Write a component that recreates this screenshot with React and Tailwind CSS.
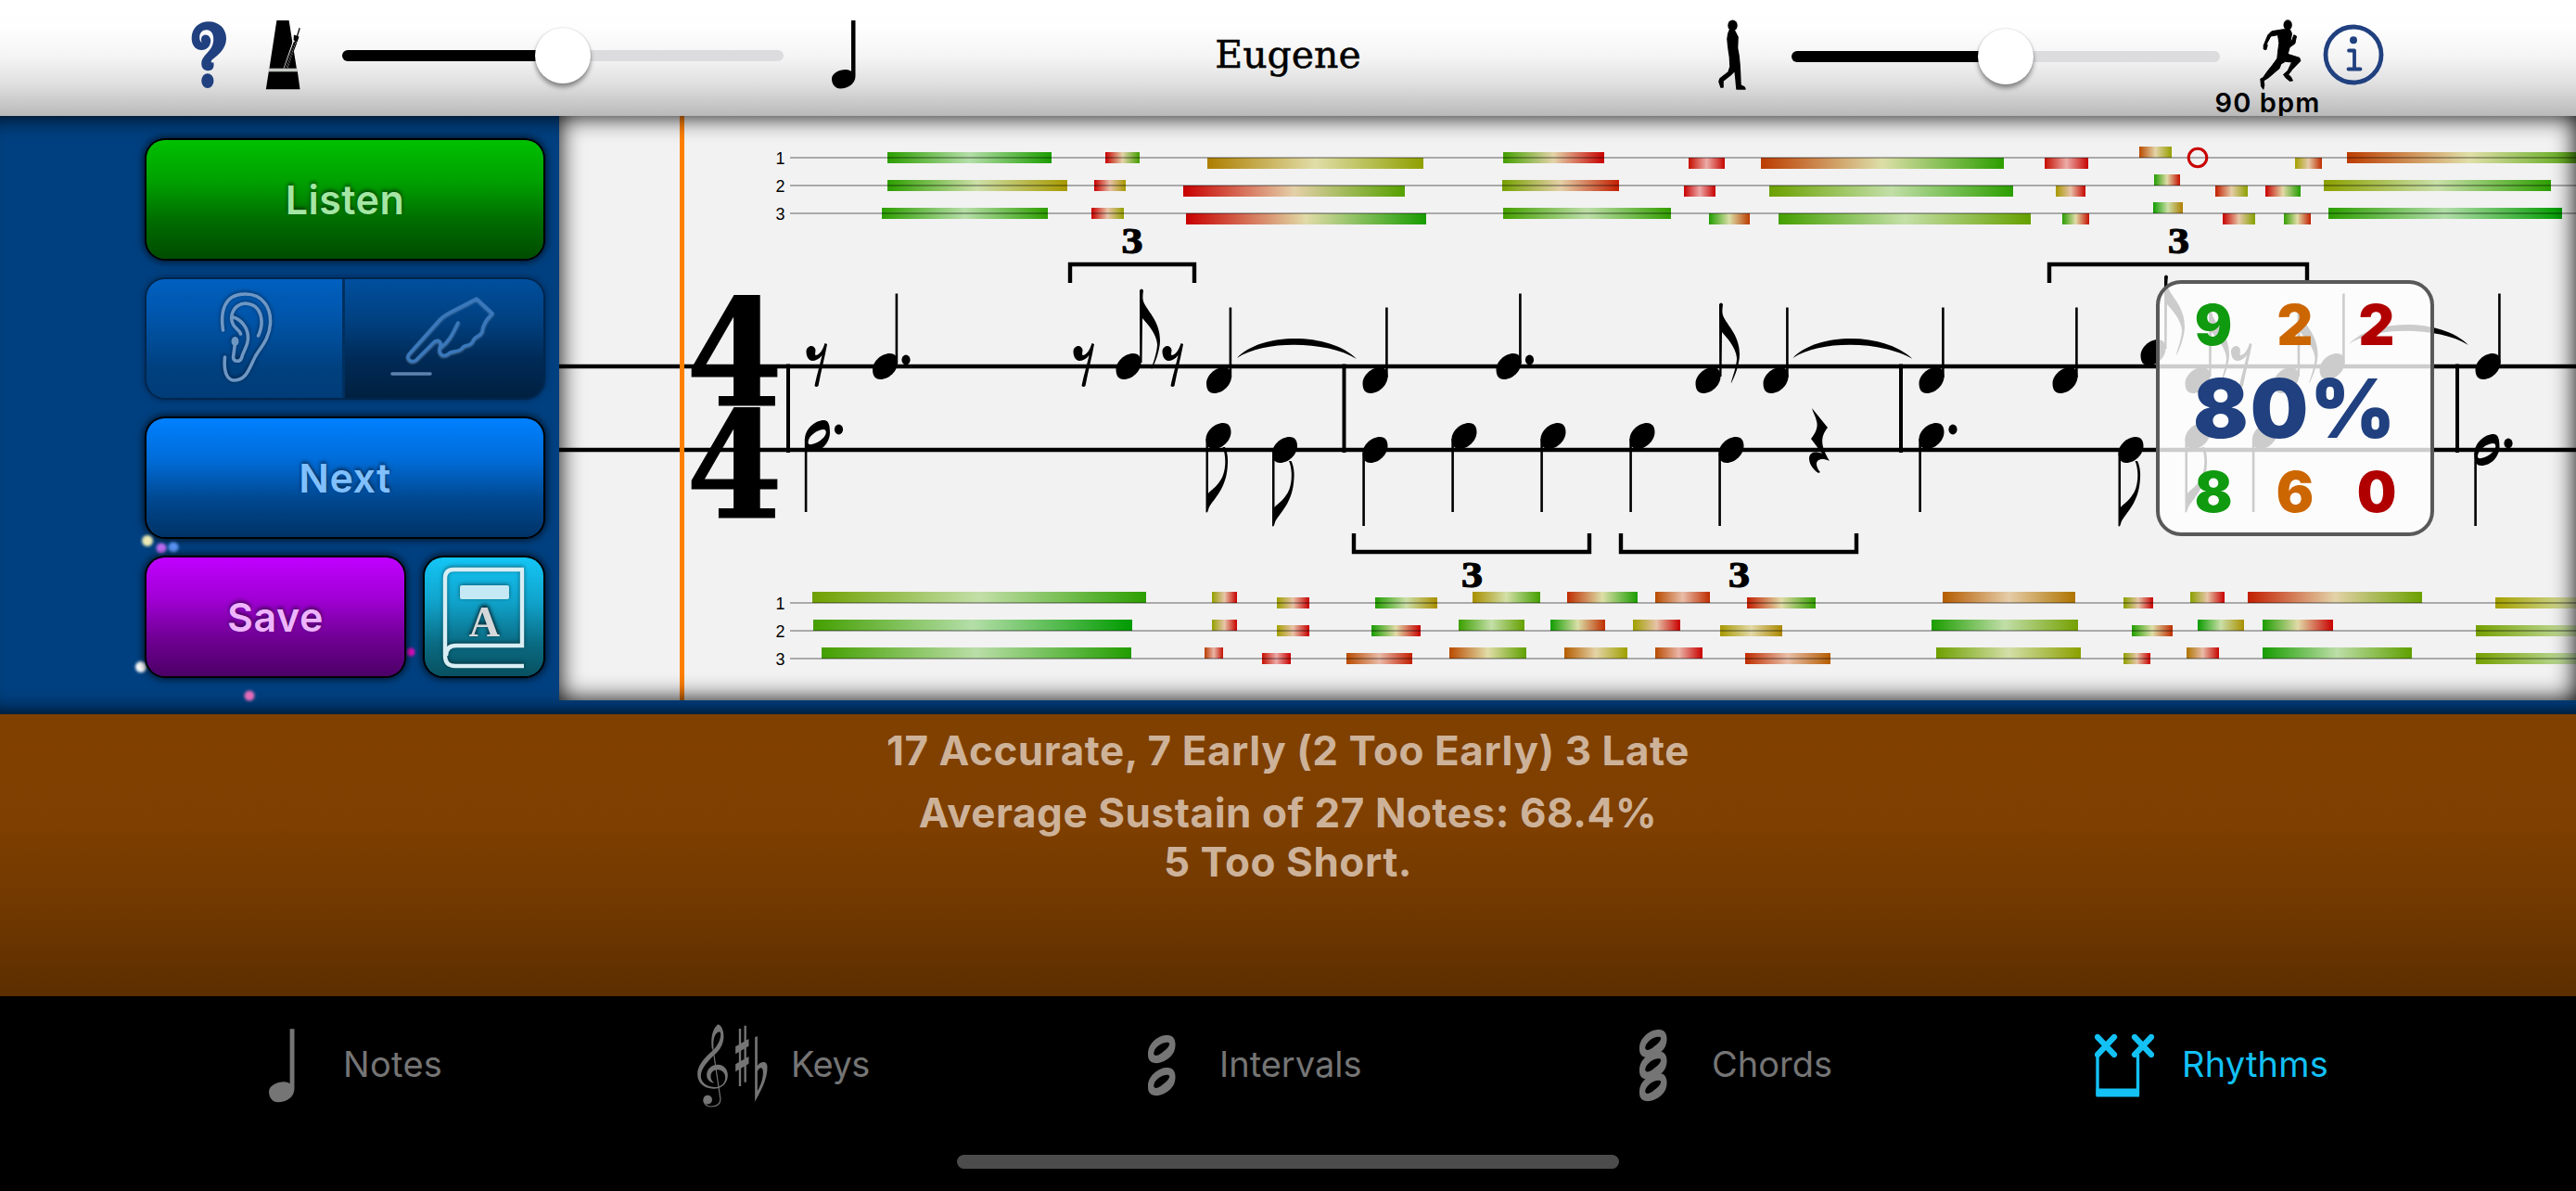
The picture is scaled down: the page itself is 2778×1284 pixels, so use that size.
import clsx from "clsx";

/* ---------- timing bars ---------- */

// 0 = far off the beat (red), 1 = spot on (green)
const STOPS = [
  [200, 0, 0],
  [185, 75, 0],
  [165, 160, 0],
  [85, 160, 0],
  [0, 155, 0],
];

function accuracyColor(t, fade = 0) {
  const pos = Math.min(Math.max(t, 0), 1) * (STOPS.length - 1);
  const i = Math.min(Math.floor(pos), STOPS.length - 2);
  const rgb = STOPS[i].map((c, k) => {
    const v = c + (STOPS[i + 1][k] - c) * (pos - i);
    return Math.round(v + (255 - v) * fade);
  });
  return `rgb(${rgb.join(",")})`;
}

// [offset, x1, x2, start accuracy, end accuracy]
const TRACKS = [
  {
    label: "1",
    y: 170,
    bars: [
      [0, 957, 1134, 0.87, 0.92],
      [0, 1192, 1229, 0, 0.8],
      [1, 1302, 1535, 0.4, 0.57],
      [0, 1621, 1730, 0.8, 0],
      [1, 1821, 1860, 0.05, 0.02],
      [1, 1899, 2161, 0.2, 0.87],
      [1, 2205, 2252, 0.05, 0.02],
      [-1, 2307, 2342, 0.25, 0.55],
      [1, 2475, 2504, 0.5, 0.15],
      [0, 2531, 2795, 0.2, 0.8],
    ],
  },
  {
    label: "2",
    y: 200,
    bars: [
      [0, 957, 1151, 0.87, 0.48],
      [0, 1180, 1214, 0, 0.48],
      [1, 1276, 1515, 0, 0.75],
      [0, 1620, 1746, 0.65, 0.1],
      [1, 1816, 1850, 0, 0],
      [1, 1908, 2171, 0.68, 0.87],
      [1, 2217, 2249, 0.48, 0.02],
      [-1, 2323, 2351, 0.9, 0.05],
      [1, 2389, 2424, 0.1, 0.57],
      [1, 2443, 2481, 0, 0.9],
      [0, 2506, 2751, 0.58, 0.87],
    ],
  },
  {
    label: "3",
    y: 230,
    bars: [
      [0, 951, 1130, 0.87, 0.87],
      [0, 1177, 1212, 0, 0.55],
      [1, 1279, 1538, 0, 0.93],
      [0, 1621, 1802, 0.8, 0.85],
      [1, 1843, 1887, 0.9, 0.2],
      [1, 1918, 2190, 0.8, 0.7],
      [1, 2224, 2253, 0.88, 0.05],
      [-1, 2322, 2354, 0.95, 0.4],
      [1, 2397, 2432, 0, 0.6],
      [1, 2463, 2492, 0.85, 0.1],
      [0, 2511, 2763, 0.87, 1],
    ],
  },
  {
    label: "1",
    y: 650,
    bars: [
      [-1, 876, 1236, 0.67, 0.87],
      [-1, 1307, 1334, 0.55, 0],
      [0, 1377, 1412, 0.52, 0],
      [0, 1483, 1550, 0.9, 0.45],
      [-1, 1588, 1661, 0.45, 0.8],
      [-1, 1690, 1766, 0.15, 0.92],
      [-1, 1785, 1844, 0.25, 0.15],
      [0, 1884, 1958, 0.1, 0.85],
      [-1, 2095, 2238, 0.3, 0.37],
      [0, 2290, 2322, 0.58, 0],
      [-1, 2362, 2399, 0.58, 0],
      [-1, 2424, 2612, 0.1, 0.68],
      [0, 2691, 2860, 0.5, 0.7],
    ],
  },
  {
    label: "2",
    y: 680,
    bars: [
      [-1, 877, 1221, 0.8, 1],
      [-1, 1307, 1334, 0.55, 0],
      [0, 1377, 1412, 0.5, 0],
      [0, 1479, 1532, 0.93, 0],
      [-1, 1573, 1644, 0.82, 0.7],
      [-1, 1672, 1731, 0.95, 0.15],
      [-1, 1761, 1812, 0.52, 0],
      [0, 1855, 1922, 0.48, 0.43],
      [-1, 2083, 2241, 0.92, 0.65],
      [0, 2299, 2343, 0.9, 0.15],
      [-1, 2370, 2420, 0.97, 0.45],
      [-1, 2440, 2516, 0.92, 0],
      [0, 2670, 2880, 0.65, 0.8],
    ],
  },
  {
    label: "3",
    y: 710,
    bars: [
      [-1, 886, 1220, 0.8, 0.9],
      [-1, 1299, 1319, 0.2, 0.05],
      [0, 1361, 1392, 0.05, 0],
      [0, 1452, 1523, 0.25, 0.1],
      [-1, 1563, 1646, 0.25, 0.72],
      [-1, 1687, 1755, 0.3, 0.52],
      [-1, 1785, 1836, 0.25, 0],
      [0, 1882, 1974, 0.15, 0.3],
      [-1, 2088, 2244, 0.67, 0.58],
      [0, 2290, 2319, 0.57, 0],
      [-1, 2358, 2393, 0.37, 0.02],
      [-1, 2440, 2601, 0.93, 0.72],
      [0, 2670, 2880, 0.65, 0.9],
    ],
  },
];

function Track({ id, track }) {
  return (
    <g>
      {track.bars.map(([offset, x1, x2, a, b], i) => (
        <g key={i}>
          <linearGradient id={`bar-${id}-${i}`}>
            <stop offset="0" stopColor={accuracyColor(a)} />
            <stop offset="0.5" stopColor={accuracyColor((a + b) / 2, 0.66)} />
            <stop offset="1" stopColor={accuracyColor(b)} />
          </linearGradient>
          <rect
            x={x1}
            y={track.y - 6 + offset * 6}
            width={x2 - x1}
            height={12}
            fill={`url(#bar-${id}-${i})`}
          />
        </g>
      ))}
      <path d={`M852 ${track.y}H2778`} stroke="#000" strokeOpacity="0.4" strokeWidth="1.6" />
      <text x="841.5" y={track.y + 6.5} textAnchor="middle" className="font-['Liberation_Sans',sans-serif] text-[18px]">
        {track.label}
      </text>
    </g>
  );
}

/* ---------- notation ---------- */

const HEAD =
  "M-13.5 3C-13.5-5-4-14 5-14C11-14 13.5-10 13.5-4C13.5 5 4 14-5 14C-11 14-13.5 10-13.5 3Z";
const HALF_HEAD =
  "M-13.5 4C-13.5-8-2-17 7-17C12-17 13.5-12 13.5-3C13 8 4 17-6 17C-11 17-13.5 14-13.5 4ZM-10 7C-10 11-3 9 3 5C10 0 11-6 7-7C0-7-10 0-10 7Z";
const FLAG_UP =
  "M12-82Q14-85 16-82C15-74 15-71 18-66C24-56 34-46 34-28C34-18 29-4 25 3C24 3 31-14 31-24C30-36 20-46 15-52L14.5-4H12.2Z";
const FLAG_DOWN =
  "M-13.5 3V82Q-12 84-10.5 78C-6 68 9 58 10 30C10.5 22 9 16 7 12H4.5C9 22 8 40 2 48C-3 56-8 58-11 62V3Z";
const EIGHTH_REST =
  "M0 9C0 3 8 0 10 7C10 10 9 12 10 13C14 13 18 7 20 0L22.5 1C20 15 16 30 13 46Q11 48 9 46C11 36 14 26 17 13C14 17 10 19 6 19C2 18 0 14 0 9Z";
const QUARTER_REST =
  "M3 0L20 21C12 31 12 40 22 57C13 53 8 56 8 60C8 64 11 68 12 69L10 70C4 66 0 60 0 54C1 46 8 47 14 49L2 33C7 27 10 20 8 14C7 9 4 4 3 0Z";

const NOTES = [
  { x: 954.5, y: 395, dot: true },
  { x: 1217, y: 395, flag: true },
  { x: 1314.5, y: 410 },
  { x: 1483, y: 410 },
  { x: 1627, y: 395, dot: true },
  { x: 1842, y: 410, flag: true },
  { x: 1915, y: 410 },
  { x: 2083, y: 410 },
  { x: 2227, y: 410 },
  { x: 2322, y: 380, flag: true },
  { x: 2370, y: 410, flag: true },
  { x: 2465.5, y: 410, flag: true },
  { x: 2515, y: 395 },
  { x: 2683, y: 395 },
  { x: 881.5, y: 470, down: true, half: true, dot: true },
  { x: 1314, y: 470, down: true, flag: true },
  { x: 1385.5, y: 485, down: true, flag: true },
  { x: 1483, y: 485, down: true },
  { x: 1579, y: 470, down: true },
  { x: 1675, y: 470, down: true },
  { x: 1771, y: 470, down: true },
  { x: 1867, y: 485, down: true },
  { x: 2083, y: 470, down: true, dot: true },
  { x: 2298, y: 485, down: true, flag: true },
  { x: 2370, y: 470, down: true, flag: true },
  { x: 2442.5, y: 470, down: true },
  { x: 2682, y: 485, down: true, half: true, dot: true },
];

const TRIPLETS = [
  { x1: 1154, x2: 1288, textX: 1221, textY: 273, y: 285, tip: 305 },
  { x1: 2210, x2: 2488, textX: 2349.5, textY: 273, y: 285, tip: 305 },
  { x1: 1460, x2: 1714, textX: 1587.5, textY: 633, y: 595, tip: 575 },
  { x1: 1748, x2: 2002, textX: 1875.5, textY: 633, y: 595, tip: 575 },
];

const TIES = [
  [1334, 386],
  [1933.5, 386],
  [2533, 371],
];

function Note({ x, y, down, half, flag, dot }) {
  return (
    <g transform={`translate(${x} ${y})`}>
      <path d={half ? HALF_HEAD : HEAD} fillRule="evenodd" />
      {flag && <path d={down ? FLAG_DOWN : FLAG_UP} />}
      {!flag && <path d={down ? "M-12.4 3V82" : "M12.4-3V-78.5"} stroke="#000" strokeWidth="2.6" />}
      {dot && <ellipse cx={half || down ? 23 : 22.5} cy="-7" rx="4.6" ry="5.4" />}
    </g>
  );
}

function Score() {
  return (
    <svg viewBox="603 125 2175 630" className="block h-[630px] w-[2175px]">
      {TRACKS.map((track, i) => (
        <Track key={i} id={i} track={track} />
      ))}
      <circle cx="2370" cy="170" r="9.8" fill="none" stroke="#c80000" strokeWidth="3" />

      <path d="M603 395H2778M603 485H2778" stroke="#000" strokeWidth="4.6" />
      <path d="M850 392.5V488M1449.5 392.5V488M2050 392.5V488M2650 392.5V488" stroke="#000" strokeWidth="4" />

      {/* time signature */}
      {[437, 558].map((y) => (
        <text
          key={y}
          transform={`translate(792 ${y}) scale(0.94 1)`}
          textAnchor="middle"
          stroke="#000"
          strokeWidth="1"
          className="font-['DejaVu_Serif',serif] text-[159px] font-bold"
        >
          4
        </text>
      ))}

      {NOTES.map((note, i) => (
        <Note key={i} {...note} />
      ))}
      {[869.5, 1157.5, 1253.5, 2406].map((x) => (
        <path key={x} d={EIGHTH_REST} transform={`translate(${x} 370)`} />
      ))}
      <path d={QUARTER_REST} transform="translate(1951 440)" />
      {TIES.map(([x, y]) => (
        <path
          key={x}
          d="M0 0C26-28 100-28 129 1C98-18 30-20 0 0Z"
          transform={`translate(${x} ${y})`}
        />
      ))}

      {TRIPLETS.map((t) => (
        <g key={t.textX}>
          <path d={`M${t.x1} ${t.tip}V${t.y}H${t.x2}V${t.tip}`} fill="none" stroke="#000" strokeWidth="4.4" />
          <text
            transform={`translate(${t.textX} ${t.textY}) scale(1.18 1)`}
            textAnchor="middle"
            stroke="#000"
            strokeWidth="1.2"
            className="font-['Liberation_Serif',serif] text-[39px] font-bold"
          >
            3
          </text>
        </g>
      ))}

      {/* playhead */}
      <path d="M735.5 125V755" stroke="#ff8000" strokeWidth="5" />
    </svg>
  );
}

function ScoreCard() {
  const top = ["9", "2", "2"];
  const bottom = ["8", "6", "0"];
  const colors = ["text-[#0f9a0f]", "text-[#cc6600]", "text-[#b00000]"];
  const row = (values) => (
    <div className="flex justify-center text-[60px] leading-[60px]">
      {values.map((v, i) => (
        <span key={i} className={clsx("w-[88px] text-center", colors[i])}>
          {v}
        </span>
      ))}
    </div>
  );
  return (
    <div className="absolute top-[177px] left-[1722px] flex h-[276px] w-[300px] flex-col items-stretch rounded-[27px] border-[4.5px] border-[#595959] bg-white/80 pt-[14px] font-['Inter',sans-serif] font-black">
      {row(top)}
      <div className="my-[15px] text-center text-[88px] leading-[90px] tracking-[2px] text-[#20407f]">80%</div>
      {row(bottom)}
    </div>
  );
}

/* ---------- top bar ---------- */

function HelpIcon() {
  return (
    <svg viewBox="46 38 118 222" className="h-[74px] w-[39px]" fill="#20407f">
      <path d="M104 41C139 41 161 66 161 96C161 130 134 150 117 163C108 171 112 178 119 173C123 188 118 201 101 201C88 201 80 192 80 178C80 160 96 148 106 135C116 122 121 108 119 92C117 76 108 68 96 68C82 68 75 78 74 90C73 99 76 107 82 110C76 100 80 84 93 84C104 84 111 94 110 106C108 124 96 133 82 134C62 135 48 118 48 96C48 64 70 41 104 41Z" />
      <ellipse cx="100" cy="234" rx="20" ry="24" />
    </svg>
  );
}

function MetronomeIcon() {
  return (
    <svg viewBox="286 30 114 230" className="h-[76px] w-[38px]">
      <path d="M323 33H363L388 190H299ZM297 200H391L399 258H288Z" />
      <path d="M351 192L383 100" stroke="#fff" strokeWidth="13" />
      <path d="M348 190L381 102M356 190L388 104" stroke="#000" strokeWidth="3.4" />
      <path d="M352 190L385 100L398 58" fill="none" stroke="#000" strokeWidth="4" />
      <path d="M379 80L396 86L390 104L378 97Z" />
      <path d="M296 195H392" stroke="#c4c8c4" strokeWidth="9" />
    </svg>
  );
}

function QuarterNoteIcon({ className }) {
  return (
    <svg viewBox="0 0 26 74" className={className} fill="currentColor">
      <path d="M0 63C0 57 8 53 15 53C18 53 20 54 21 55V0H25.5V60C25.5 68 18 73.5 9 73.5C4 73.5 0 69 0 63Z" />
    </svg>
  );
}

function WalkIcon() {
  return (
    <svg viewBox="0 21 33 77" className="h-[77px] w-[33px]">
      <ellipse cx="17.5" cy="27.5" rx="5.2" ry="6" />
      <path
        d="M15 31L13 36L12 42L13 52L14.5 62L15 72L13 78L4 85L3 88L5 94L7 94L7 87L16 80L20 76L21 85L22 96H31L30 94L26 92L25.5 80L25 70L24 60L22.5 52L23 40L20 34Z"
        stroke="#000"
        strokeWidth="1.6"
        strokeLinejoin="round"
      />
    </svg>
  );
}

function RunIcon() {
  return (
    <svg viewBox="172 34 134 228" className="h-[76px] w-[45px]">
      <ellipse cx="262" cy="52" rx="14" ry="17" />
      <path
        d="M248 66L210 72L198 84L184 118L184 130L192 132L196 118L194 112L207 88L230 84L234 110L230 140L228 160L212 182L196 202L182 222L174 226L176 250L183 260L186 246L184 232L200 222L235 192L240 178L254 170L275 172L262 200L248 212L255 222L268 233L278 232L272 220L264 212L277 195L303 168L300 158L262 146L268 124L285 112L290 88L282 84L277 98L270 108L275 80L270 68Z"
        stroke="#000"
        strokeWidth="3"
        strokeLinejoin="round"
      />
    </svg>
  );
}

function InfoIcon() {
  return (
    <svg viewBox="0 0 66 66" className="h-[66px] w-[66px]" fill="none" stroke="#20407f" strokeLinecap="round">
      <circle cx="33" cy="33" r="30" strokeWidth="4.8" />
      <circle cx="33" cy="17.2" r="4" fill="#20407f" stroke="none" />
      <path d="M28 28.5H34V48.5M27.5 48.5H40.5" strokeWidth="3.8" strokeLinejoin="round" />
    </svg>
  );
}

function Slider({ className, value }) {
  return (
    <div className={clsx("flex h-[60px] items-center", className)}>
      <div className="h-3 rounded-l-full bg-black" style={{ width: `calc(${value}% - 26px)` }} />
      <div className="relative -mx-1 size-[60px] shrink-0 rounded-full bg-white shadow-[0_4px_5px_rgba(0,0,0,0.4),0_0_2px_rgba(0,0,0,0.2)]" />
      <div className="h-3 flex-1 rounded-r-full bg-[#dcdcde]" />
    </div>
  );
}

function TopBar() {
  return (
    <header className="flex h-[125px] items-start bg-[linear-gradient(#fff_0%,#fefefe_24%,#f4f4f4_50%,#e0e0e0_72%,#b9b9b9_100%)] pt-[21px] pl-[206px]">
      <div className="mt-[1px]">
        <HelpIcon />
      </div>
      <div className="ml-[41px]">
        <MetronomeIcon />
      </div>
      <Slider className="mt-[9px] ml-[45px] w-[476px]" value={50} />
      <QuarterNoteIcon className="mt-[1px] ml-[52px] h-[74px] w-[26px]" />
      <h1 className="mt-[11px] ml-[337px] w-[258px] text-center font-['DejaVu_Serif',serif] text-[41px] leading-[54px] font-normal [-webkit-text-stroke:0.5px_#000]">
        Eugene
      </h1>
      <div className="ml-[333px]">
        <WalkIcon />
      </div>
      <Slider className="mt-[10px] ml-[48px] w-[462px]" value={50} />
      <div className="-ml-[6px] flex w-[112px] flex-col items-center">
        <div className="ml-[31px]">
          <RunIcon />
        </div>
        <span className="-mt-[2px] ml-[3px] font-['Inter',sans-serif] text-[29px] leading-8 font-semibold tracking-[1.1px] whitespace-nowrap">
          90 bpm
        </span>
      </div>
      <div className="mt-[5px] ml-[5px]">
        <InfoIcon />
      </div>
    </header>
  );
}

/* ---------- side panel ---------- */

const BUTTON =
  "flex h-32 items-center justify-center rounded-[20px] font-['Inter',sans-serif] text-[43px] font-semibold tracking-[0.5px] shadow-[0_0_0_2px_#000,0_0_8px_3px_rgba(0,0,0,0.75)] [text-shadow:0_-2px_4px_rgba(0,0,0,0.6)]";

function EarIcon() {
  return (
    <svg
      viewBox="227.5 312 70 106"
      className="h-[106px] w-[70px] drop-shadow-[0_-1px_2px_rgba(0,0,0,0.5)]"
      fill="none"
      stroke="#6f97c4"
      strokeWidth="3.6"
      strokeLinecap="round"
    >
      <path d="M239 356C236 336 240 317 263 317C283 317 291 333 290 349C289 365 280 374 274 384C267 397 265 410 250 410C241 408 240 396 241 385" />
      <path d="M277 362C284 347 281 328 263 327C251 328 245 340 250 350C252 354 257 356 258 360" />
      <path d="M250 342C258 344 266 353 266 364C266 373 261 378 259 386C257 391 250 390 250 385L252 370" />
      <ellipse cx="252" cy="368" rx="4" ry="5" fill="#6f97c4" stroke="none" />
    </svg>
  );
}

function TapIcon() {
  return (
    <svg viewBox="417 317 122 96" className="h-[96px] w-[122px]" fill="none" strokeLinecap="round" strokeLinejoin="round">
      <path
        d="M513 322L530 338C524 344 520 349 519 358C516 364 511 361 509 368C505 375 500 370 497 376C491 381 486 377 482 382C475 386 471 380 474 373C475 368 472 366 468 368L448 388C443 392 436 387 440 382L474 344Q478 340 484 337ZM493 348C488 358 484 368 474 375"
        stroke="#3a78bc"
        strokeWidth="3.4"
        className="drop-shadow-[0_1px_1px_rgba(160,185,215,0.5)]"
      />
      <path d="M422 403H463" stroke="#5c82ae" strokeWidth="3.6" />
    </svg>
  );
}

function BookIcon() {
  return (
    <svg viewBox="0 0 128 128" className="size-32 drop-shadow-[0_-1px_2px_rgba(0,0,0,0.5)]" fill="none" stroke="#d8eef4" strokeWidth="4.4">
      <path d="M107 13H31Q22 13 22 23V106Q22 117 33 117H107" />
      <path d="M105 13V95H34Q23 95 23 106" />
      <rect x="38" y="30" width="53" height="15" rx="2" fill="#c4e9f4" stroke="none" />
      <text x="64.5" y="84.5" textAnchor="middle" fill="#d4d8da" stroke="none" className="font-['Liberation_Serif',serif] text-[46px] font-bold">
        A
      </text>
    </svg>
  );
}

const SPARKS = [
  { x: 159, y: 458, r: 6, color: "#ecebb4" },
  { x: 174, y: 466, r: 5.5, color: "#bd6bf0" },
  { x: 187, y: 465, r: 5.5, color: "#5a92f2" },
  { x: 152, y: 594, r: 6, color: "#ffffff" },
  { x: 443, y: 578, r: 4.5, color: "#e60cc4" },
  { x: 269, y: 625, r: 5.5, color: "#e46cb8" },
];

function SidePanel() {
  return (
    <aside className="relative flex w-[603px] shrink-0 flex-col gap-[22px] pt-[26px] pr-[17px] pl-[158px]">
      <button className={clsx(BUTTON, "bg-[linear-gradient(#00c000,#00a000_35%,#006c00_68%,#004c00)] text-[#a4e6a4]")}>
        Listen
      </button>
      <div className="flex h-32 overflow-hidden rounded-[20px] shadow-[0_0_0_2px_#00264d,0_0_7px_2px_rgba(0,20,50,0.6)]">
        <div className="flex w-[214px] items-center justify-center border-r-[3px] border-[#00305f] bg-[linear-gradient(#0060c0,#0054a8_35%,#00407f_75%,#003c78)]">
          <EarIcon />
        </div>
        <div className="flex flex-1 items-center justify-center bg-[linear-gradient(#004f9e,#004080_35%,#002a56_68%,#002040)]">
          <TapIcon />
        </div>
      </div>
      <button className={clsx(BUTTON, "bg-[linear-gradient(#0080ff,#006cd8_35%,#004890_68%,#003366)] text-[#80c0ff]")}>
        Next
      </button>
      <svg viewBox="0 0 603 645" className="absolute inset-0 h-[645px] w-[603px] blur-[1.5px]">
        {SPARKS.map((s) => (
          <circle key={s.x} cx={s.x} cy={s.y} r={s.r} fill={s.color} />
        ))}
      </svg>
      <div className="relative flex justify-between">
        <button className={clsx(BUTTON, "w-[278px] bg-[linear-gradient(#c000ff,#a000d4_35%,#700094_68%,#4c0066)] text-[#efb4ff]")}>
          Save
        </button>
        <button className={clsx(BUTTON, "w-32 bg-[linear-gradient(#14c6f6,#10a2ca_38%,#0a6c84_72%,#085060)]")}>
          <BookIcon />
        </button>
      </div>
    </aside>
  );
}

/* ---------- bottom tabs ---------- */

function KeysIcon() {
  return (
    <svg viewBox="36 24 230 276" className="h-[92px] w-[77px]" fill="currentColor">
      <path d="M103 28C84 40 78 75 83 108L88 104C86 80 90 55 108 52C116 60 108 90 88 110C60 135 36 160 36 188C36 220 62 238 92 236C120 234 134 215 134 192C134 170 118 158 103 158C82 158 66 172 66 192C66 206 76 216 90 218C80 208 78 202 79 194C80 182 90 174 102 175C116 176 126 186 126 200C126 218 112 231 90 231C66 231 46 214 47 194C48 168 76 140 98 120C118 100 124 75 119 52C116 38 110 30 103 28Z" />
      <path d="M86 105L110 268C112 285 98 294 82 294C68 294 58 286 56 274" fill="none" stroke="currentColor" strokeWidth="3.6" />
      <circle cx="69" cy="272" r="14.5" />
      <path d="M170 42H177V228H170ZM187 32H194V215H187ZM159 100L202 75V98L159 124ZM159 157L202 132V155L159 181Z" />
      <path
        fillRule="evenodd"
        d="M222 70L230 66V162C240 146 262 144 262 166C262 200 248 232 222 278ZM230 180V244C242 224 249 200 248 180C247 164 236 166 230 180Z"
      />
    </svg>
  );
}

// open note head shared by the interval and chord icons
const WHOLE =
  "M0 21C-1 9 12-1 22 0C30 1 31 10 28 18C24 26 14 31 7 30C2 29 0 26 0 21ZM6.5 18C5 23 10 23 15 19C22 14 25 9 22 8C17 7 8 12 6.5 18Z";

function WholeNotes({ offsets, className, height }) {
  return (
    <svg viewBox={`0 0 30 ${height}`} className={className} fill="currentColor" fillRule="evenodd">
      {offsets.map((y) => (
        <path key={y} d={WHOLE} transform={`translate(0 ${y})`} />
      ))}
    </svg>
  );
}

function RhythmsIcon() {
  return (
    <svg viewBox="0 0 64 68" className="h-[68px] w-[64px]" fill="none" stroke="currentColor">
      <path d="M3 3L21 22M21 3L3 22M43 3L61 22M61 3L43 22" strokeWidth="6.2" strokeLinecap="round" />
      <path d="M3 22V66M46.5 22V66" strokeWidth="3.4" />
      <path d="M1.5 63H48" strokeWidth="9" />
    </svg>
  );
}

const TABS = [
  { label: "Notes", width: "w-[462px]", iconBox: "w-[80px]", text: "tracking-[0.3px]", icon: <QuarterNoteIcon className="h-[82px] w-[28px]" /> },
  { label: "Keys", width: "w-[486px]", iconBox: "w-[101px]", text: "-tracking-[0.5px]", icon: <KeysIcon /> },
  {
    label: "Intervals",
    width: "w-[530px]",
    iconBox: "w-[77px]",
    text: "tracking-normal",
    icon: <WholeNotes offsets={[0, 35]} height={66} className="h-[66px] w-[30px]" />,
  },
  {
    label: "Chords",
    width: "w-[491px]",
    iconBox: "w-[78px]",
    text: "tracking-normal",
    icon: <WholeNotes offsets={[0, 23.5, 47]} height={78} className="h-[78px] w-[30px]" />,
  },
  { label: "Rhythms", width: "w-[400px]", iconBox: "w-[94px]", text: "tracking-[0.2px]", icon: <RhythmsIcon />, active: true },
];

function TabBar() {
  return (
    <footer className="flex h-[210px] flex-col items-center bg-black">
      <nav className="flex w-full pt-[24px] pl-[290px]">
        {TABS.map((tab) => (
          <div
            key={tab.label}
            className={clsx("flex h-[102px] items-center", tab.width, tab.active ? "text-[#13c1f5]" : "text-[#757575]")}
          >
            <div className={tab.iconBox}>{tab.icon}</div>
            <span className={clsx("pb-[4px] font-['Inter',sans-serif] text-[38px] leading-none", tab.text)}>{tab.label}</span>
          </div>
        ))}
      </nav>
      <div className="mt-[45px] h-[15px] w-[714px] rounded-full bg-[#4c4c4c]" />
    </footer>
  );
}

export default function App() {
  return (
    <div className="flex h-[1284px] w-[2778px] flex-col overflow-hidden bg-black text-black">
      <TopBar />
      <main className="flex h-[645px] bg-[#004080] shadow-[inset_0_24px_24px_-24px_#000,inset_0_-24px_24px_-24px_#000]">
        <SidePanel />
        <section className="relative h-[630px] w-[2175px] bg-[#f2f2f2]">
          <Score />
          <div className="absolute inset-0 shadow-[inset_0_0_26px_#000]" />
          <ScoreCard />
        </section>
      </main>
      <section className="h-[304px] bg-[linear-gradient(#804000_0%,#7e3f00_40%,#703800_70%,#5c2e00_100%)] pt-[13px] text-center font-['Inter',sans-serif] text-[44px] leading-[53px] font-bold tracking-[0.55px] text-[#cdb299]">
        <p>17 Accurate, 7 Early (2 Too Early) 3 Late</p>
        <p className="mt-[14px]">Average Sustain of 27 Notes: 68.4%</p>
        <p>5 Too Short.</p>
      </section>
      <TabBar />
    </div>
  );
}
